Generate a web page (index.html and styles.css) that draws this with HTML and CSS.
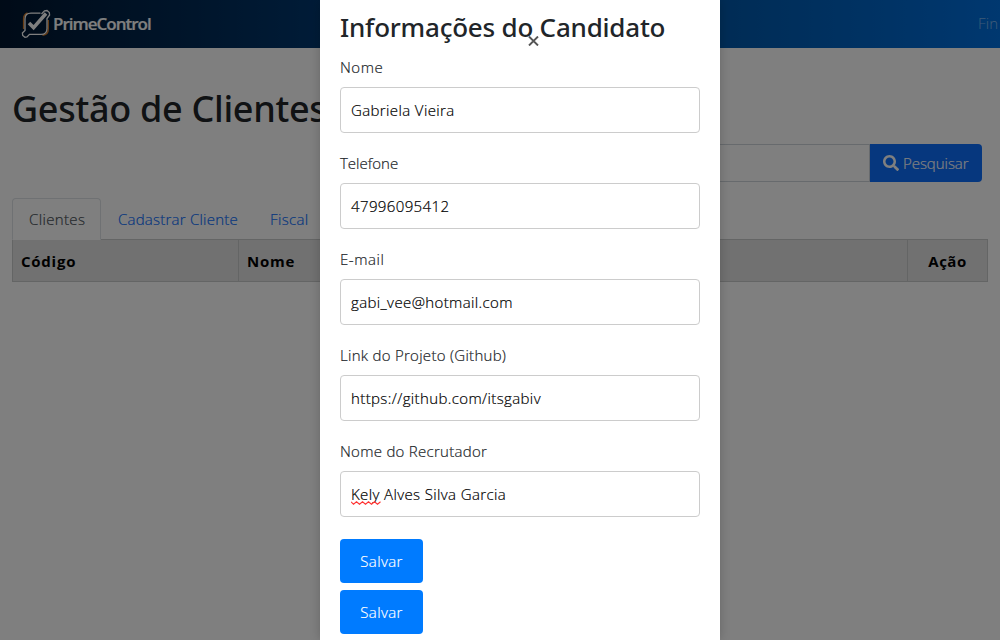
FILE: index.html
```html
<!DOCTYPE html>
<html lang="pt-BR">
<head>
<meta charset="utf-8">
<title>Gestão de Clientes</title>
<link rel="stylesheet" href="styles.css">
</head>
<body>
<div class="page">
  <header class="topbar">
    <div class="brand">
      <svg class="brand-mark" viewBox="0 0 30 30" width="30" height="30">
        <path d="M6.500 4 C3.500 5 2.600 7 2.600 10 V20" fill="none" stroke="#d07a28" stroke-width="1.400"/>
        <path d="M27.300 11 V20 C27.300 23.500 25.500 26 21.500 26.200" fill="none" stroke="#d07a28" stroke-width="1.400"/>
        <path d="M19.500 4.200 H10 C5.500 4.200 4 6 4 10 V21.500 L1.400 24 L1.700 26.500 L4 28.300 L6 28 L8.500 25.400 H20 C24.500 25.400 26 23.500 26 19.500 V9.500 L28.600 6 L28.300 3.500 L26 1.500 L23.500 1.800 L20.500 5" fill="none" stroke="#fff" stroke-width="1.300"/>
        <path d="M8 14 L12.600 18.600 L25 4.500" fill="none" stroke="#fff" stroke-width="3.500"/>
      </svg>
      <span class="brand-name">PrimeControl</span>
    </div>
    <span class="nav-link">Fin</span>
  </header>
  <main class="content">
    <h1 class="title">Gestão de Clientes</h1>
    <div class="search">
      <div class="search-input"></div>
      <button class="search-btn">
        <svg viewBox="0 0 512 512" width="16" height="16"><path fill="currentColor" d="M505 442.700L405.300 343c-4.500-4.500-10.600-7-17-7H372c27.600-35.300 44-79.700 44-128C416 93.100 322.900 0 208 0S0 93.100 0 208s93.100 208 208 208c48.300 0 92.700-16.400 128-44v16.300c0 6.400 2.500 12.500 7 17l99.700 99.700c9.400 9.400 24.600 9.400 33.900 0l28.300-28.300c9.400-9.400 9.400-24.600.1-34zM208 336c-70.700 0-128-57.200-128-128 0-70.700 57.200-128 128-128 70.700 0 128 57.200 128 128 0 70.700-57.200 128-128 128z"/></svg>
        <span class="search-text">Pesquisar</span>
      </button>
    </div>
    <nav class="tabs">
      <span class="tab tab-active">Clientes</span>
      <span class="tab tab-cadastrar">Cadastrar Cliente</span>
      <span class="tab">Fiscal</span>
    </nav>
    <div class="table-head">
      <span class="th">Código</span>
      <span class="th">Nome</span>
      <span class="th th-action">Ação</span>
    </div>
  </main>
</div>
<div class="backdrop">
  <section class="modal">
    <h2 class="modal-title">Informações do Candidato</h2>
    <svg class="close" viewBox="0 0 11 10" width="11" height="10"><path d="M1 .5 L10 9.500 M10 .5 L1 9.500" stroke="#555" stroke-width="1.900" fill="none"/></svg>
    <label class="label label-short">Nome</label>
    <div class="field">Gabriela Vieira</div>
    <label class="label label-phone">Telefone</label>
    <div class="field">47996095412</div>
    <label class="label label-short">E-mail</label>
    <div class="field">gabi_vee@hotmail.com</div>
    <label class="label">Link do Projeto (Github)</label>
    <div class="field">https://github.com/itsgabiv</div>
    <label class="label">Nome do Recrutador</label>
    <div class="field field-name"><span class="misspelled">Kely<svg class="squiggle" viewBox="0 0 30 4" width="30" height="4"><path d="M0 .8 L2.500 3.200 L5.500 .8 L8.500 3.200 L11.500 .8 L14.500 3.200 L17.500 .8 L20.500 3.200 L23.500 .8 L26.500 3.200 L29.500 .8" fill="none" stroke="#f33" stroke-width="1.100"/></svg></span>&nbsp;Alves Silva Garcia</div>
    <button class="save">Salvar</button>
    <button class="save">Salvar</button>
  </section>
</div>
</body>
</html>
```
FILE: styles.css
```css
* {
  box-sizing: border-box;
}

body {
  margin: 0;
  width: 1000px;
  height: 640px;
  overflow: hidden;
  background: #fff;
  color: #212529;
  font: 300 15px/24px "Open Sans", "Noto Sans", sans-serif;
  letter-spacing: 0.35px;
  -webkit-text-stroke-width: 0.2px;
}

button {
  border: 0;
  font: inherit;
  letter-spacing: inherit;
}

.topbar {
  height: 48px;
  padding-left: 21px;
  display: flex;
  align-items: center;
  justify-content: space-between;
  background: linear-gradient(to right, #00162f, #003870 32%, #0058aa 72%, #0070e0);
}

.brand {
  display: flex;
  align-items: center;
  gap: 2px;
}

.brand-name {
  color: #fff;
  font: 600 17px/24px "Open Sans", sans-serif;
  letter-spacing: -1px;
}

.nav-link {
  width: 22px;
  margin-bottom: 3px;
  color: rgba(255, 255, 255, 0.5);
  letter-spacing: 0.2px;
  -webkit-text-stroke-width: 0;
}

.content {
  padding: 37px 12px 0;
}

.title {
  height: 48px;
  margin: 0 0 35px;
  font: 500 36px/48px "Noto Sans", sans-serif;
  letter-spacing: -0.3px;
  white-space: nowrap;
  -webkit-text-stroke-width: 0;
}

.search {
  margin: -24px 6px 16px 468px;
  height: 38px;
  display: flex;
}

.search-input {
  flex: 1;
  border: 1px solid #ced4da;
}

.search-btn {
  width: 112px;
  padding: 0 0 0 13px;
  display: flex;
  align-items: center;
  gap: 4px;
  border-radius: 0 4px 4px 0;
  background: #0d6efd;
  color: #fff;
}

.search-text {
  letter-spacing: -0.05px;
}

.tabs {
  display: flex;
  height: 42px;
  border-bottom: 1px solid #dee2e6;
}

.tab {
  height: 42px;
  padding: 8px 16px;
  border: 1px solid transparent;
  color: #0d6efd;
  white-space: nowrap;
}

.tab-active {
  width: 89px;
  border-color: #dee2e6 #dee2e6 #fff;
  border-radius: 4px 4px 0 0;
  color: #495057;
}

.tab-cadastrar {
  width: 152px;
  letter-spacing: 0.23px;
}

.table-head {
  height: 43px;
  margin-top: -1px;
  display: grid;
  grid-template-columns: 226px 1fr 79px;
  border: 1px solid #c9cacb;
  background: #e2e2e2;
  color: #000;
  font-weight: 700;
  letter-spacing: 0.75px;
  -webkit-text-stroke-width: 0;
}

.th {
  padding: 9px 8px;
  border-right: 1px solid #c9cacb;
}

.th-action {
  border-right: 0;
  text-align: center;
  letter-spacing: 0.5px;
}

.backdrop {
  position: absolute;
  inset: 0;
  padding-left: 320px;
  background: rgba(0, 0, 0, 0.5);
}

.modal {
  position: relative;
  width: 400px;
  height: 640px;
  padding: 10px 20px 0;
  background: #fff;
  box-shadow: 0 0 10px rgba(0, 0, 0, 0.2);
}

.modal-title {
  height: 34px;
  margin: 0 0 8px;
  font: 500 26px/34px "Noto Sans", sans-serif;
  letter-spacing: -0.22px;
  white-space: nowrap;
  -webkit-text-stroke-width: 0;
}

.close {
  position: absolute;
  left: 208px;
  top: 36px;
}

.label {
  display: block;
  height: 35px;
  padding-top: 3px;
  letter-spacing: 0.28px;
}

.label-short {
  letter-spacing: 0.55px;
}

.label-phone {
  letter-spacing: 0;
}

.field {
  height: 46px;
  margin-bottom: 15px;
  padding: 0 10px;
  display: flex;
  align-items: center;
  border: 1px solid #ccc;
  border-radius: 4px;
  color: #000;
  letter-spacing: 0.38px;
}

.field-name {
  margin-bottom: 22px;
}

.misspelled {
  position: relative;
}

.squiggle {
  position: absolute;
  left: 0;
  bottom: 1px;
}

.save {
  display: block;
  width: 83px;
  height: 44px;
  margin-bottom: 7px;
  padding: 0;
  border-radius: 4px;
  background: #007bff;
  color: #fff;
}
```
